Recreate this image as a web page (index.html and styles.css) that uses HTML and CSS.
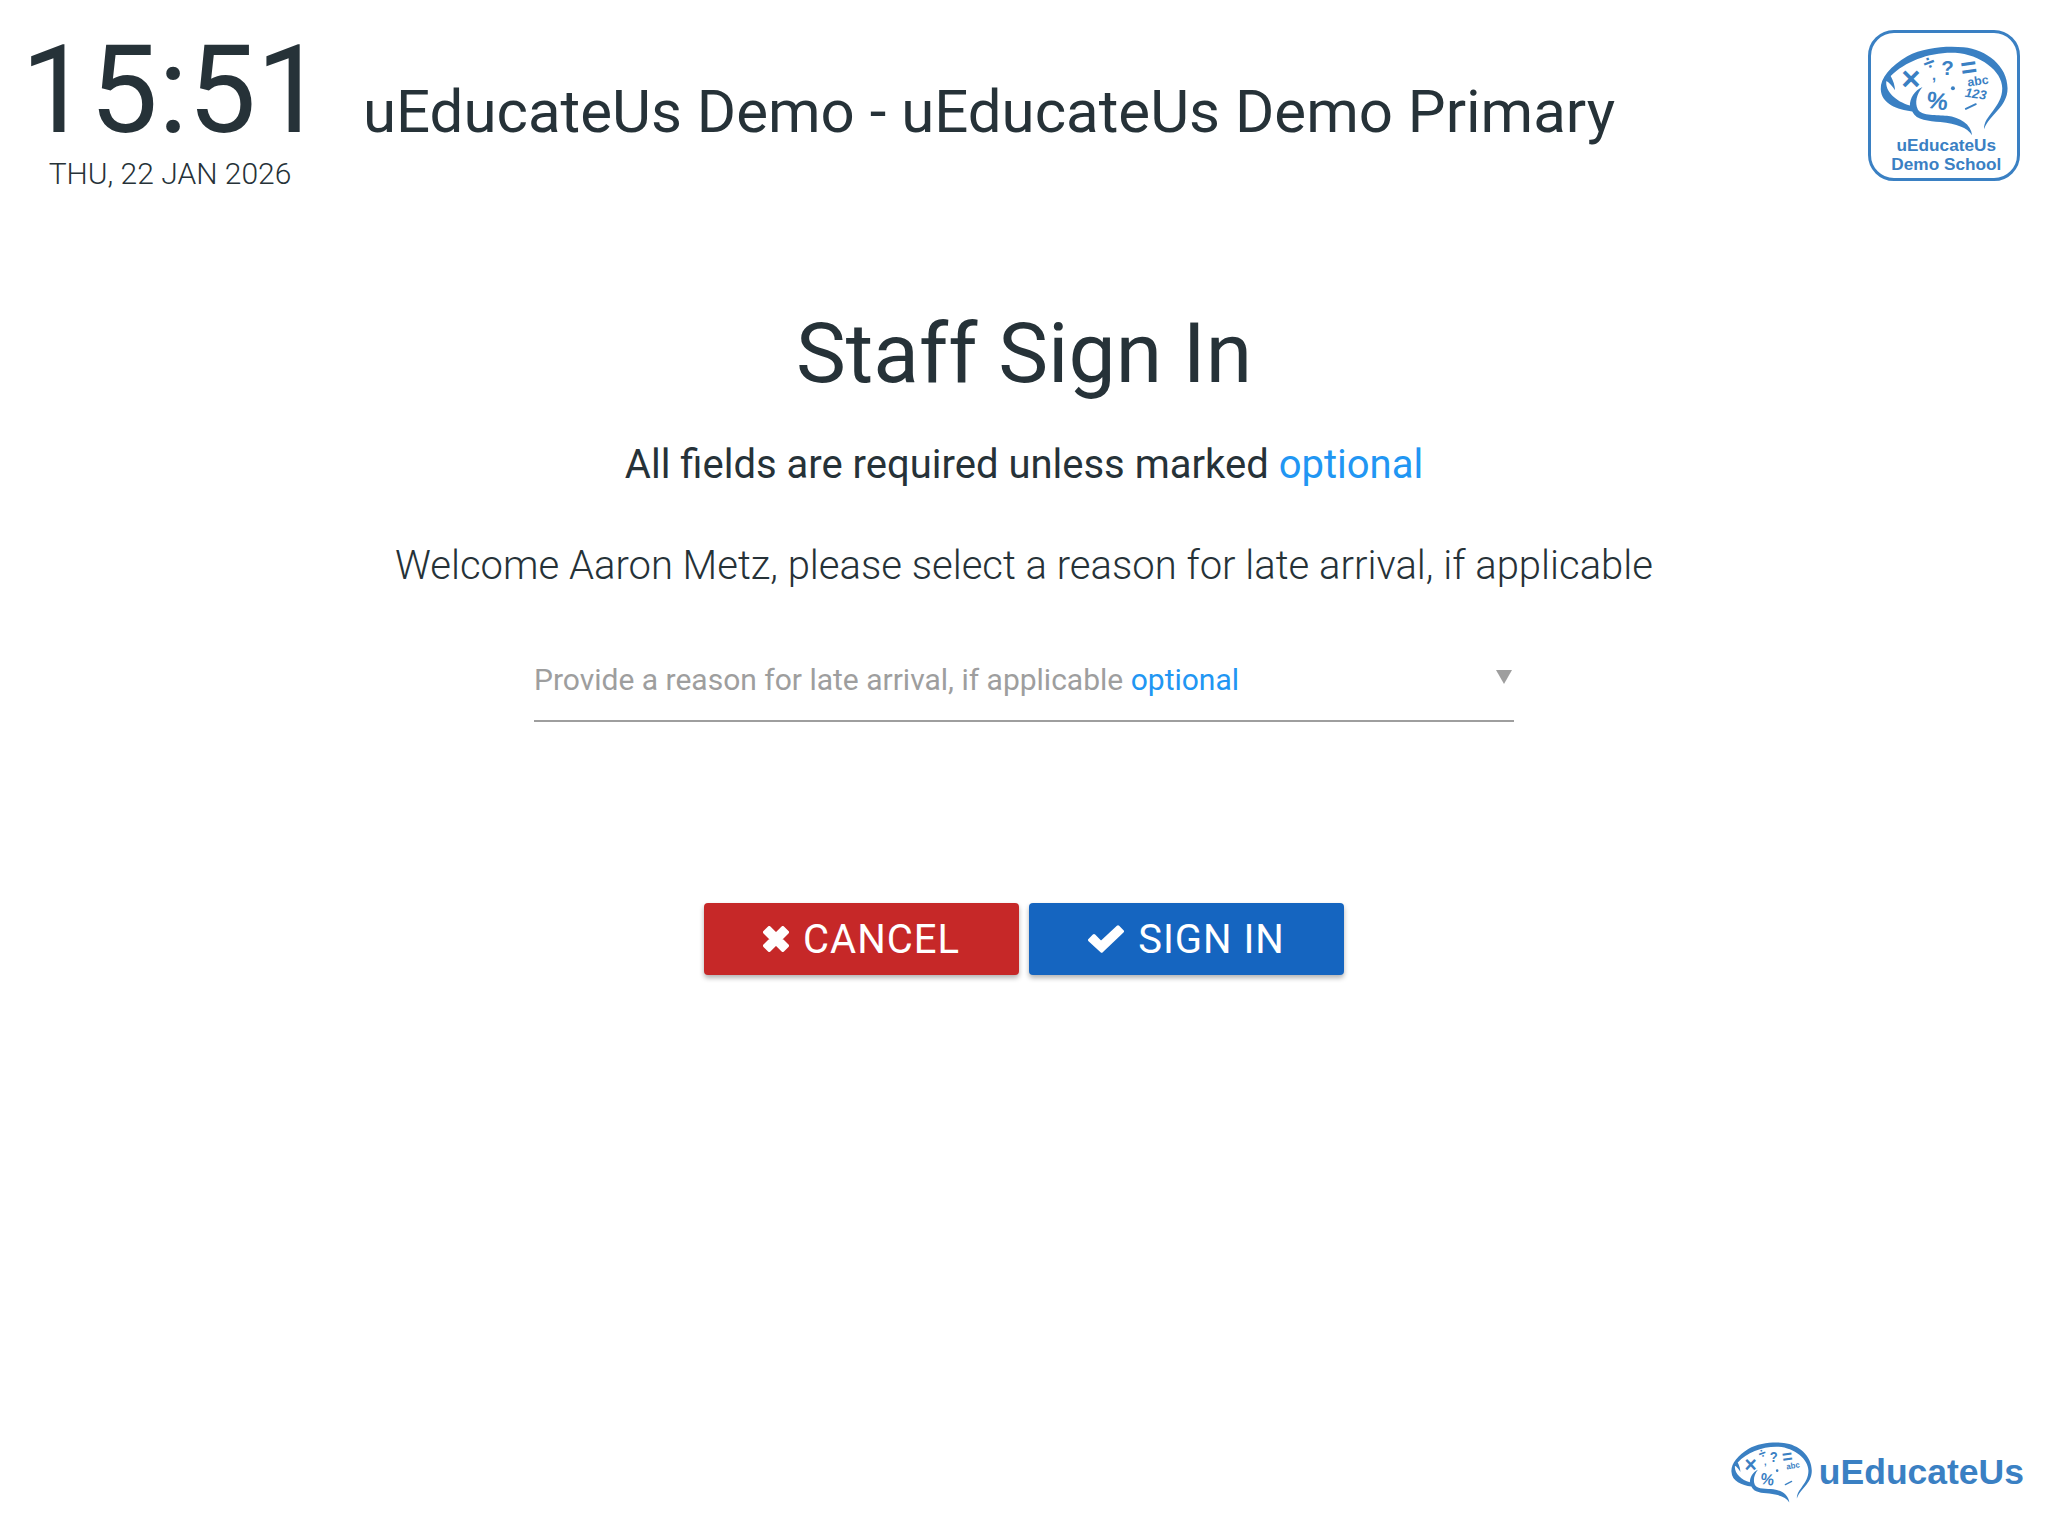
FILE: index.html
```html
<!DOCTYPE html>
<html lang="en">
<head>
    <meta charset="UTF-8">
    <meta name="viewport" content="width=device-width, initial-scale=1.0">
    <title>Staff Sign In</title>
    <link rel="stylesheet" href="styles.css">
</head>
<body>
    <!-- brain and its marks, shared by both logos -->
    <svg class="defs" width="0" height="0">
        <defs>
            <g id="brain">
                <path d="M120 235 C118 200 150 165 200 135 C250 108 320 103 370 108 C440 115 503 165 503 232 C503 290 448 310 432 356 C430 315 487 290 487 232 C487 180 420 130 345 125 C270 122 195 150 150 195 C158 210 163 225 163 238 C155 225 146 215 137 210 C132 240 165 272 208 284 C208 262 222 238 246 228 C228 250 222 275 232 296 C245 316 290 312 320 315 C360 320 392 340 396 374 C380 350 350 340 300 334 C265 330 228 330 215 302 C170 296 122 280 120 235 Z"/>
                <g class="logo-glyphs">
                    <text x="211" y="236" font-size="100">×</text>
                    <text x="266" y="175" font-size="62" transform="rotate(-20 266 155)">÷</text>
                    <text x="322" y="192" font-size="62">?</text>
                    <text x="386" y="197" font-size="84" transform="rotate(-8 386 168)">=</text>
                    <text x="281" y="207" font-size="44">,</text>
                    <text x="291" y="295" font-size="72" transform="rotate(8 291 272)">%</text>
                    <text x="413" y="222" font-size="37" transform="rotate(-8 413 205)">abc</text>
                </g>
                <circle cx="338" cy="232" r="6"/>
                <path class="brain-line" d="M377 294 L407 280"/>
            </g>
        </defs>
    </svg>

    <div class="page">
        <header class="topbar">
            <div class="clock">
                <div class="clock-time">15:51</div>
                <div class="clock-date">THU, 22 JAN 2026</div>
            </div>
            <div class="school-name">uEducateUs Demo - uEducateUs Demo Primary</div>
            <div class="school-logo">
                <svg class="school-logo-img" viewBox="92 65 438 438">
                    <use href="#brain"/>
                    <text class="logo-numbers" x="407" y="262" transform="rotate(8 407 248)">123</text>
                    <text class="logo-caption" x="318" y="420">uEducateUs</text>
                    <text class="logo-caption" x="318" y="480">Demo School</text>
                </svg>
            </div>
        </header>

        <main class="signin">
            <h1 class="signin-title">Staff Sign In</h1>
            <p class="signin-note">All fields are required unless marked <span class="optional">optional</span></p>
            <p class="signin-welcome">Welcome Aaron Metz, please select a reason for late arrival, if applicable</p>

            <div class="field">
                <span class="field-label">Provide a reason for late arrival, if applicable <span class="optional">optional</span></span>
                <span class="field-caret"></span>
            </div>

            <div class="actions">
                <button class="btn btn-cancel" type="button">
                    <svg class="btn-icon" viewBox="1.5 1.5 23 23"><path d="M7 3 L13 9 L19 3 L23 7 L17 13 L23 19 L19 23 L13 17 L7 23 L3 19 L9 13 L3 7 Z"/></svg>
                    CANCEL
                </button>
                <button class="btn btn-signin" type="button">
                    <svg class="btn-icon btn-icon-check" viewBox="1.5 1.5 33 25"><path d="M3 15 L7 11 L13.5 17.5 L29 3 L33 7 L14 25 Z"/></svg>
                    SIGN IN
                </button>
            </div>
        </main>

        <footer class="brand">
            <svg class="brand-mark" viewBox="118 104 386 272" preserveAspectRatio="none">
                <use href="#brain"/>
            </svg>
            <span class="brand-name">uEducateUs</span>
        </footer>
    </div>
</body>
</html>
```

FILE: styles.css
```css
* {
    box-sizing: border-box;
}

body {
    margin: 0;
    background-color: #fff;
    color: #263238;
    font-family: Roboto, sans-serif;
}

.defs {
    position: absolute;
}

.page {
    height: 100vh;
    display: flex;
    flex-direction: column;
    overflow: hidden;
}

/* header */
.topbar {
    display: flex;
    align-items: flex-start;
    padding: 30px 28px 0 24px;
    height: 305px;
}

.clock {
    width: 292px;
    text-align: center;
}

.clock-time {
    font-size: 122px;
    line-height: 116px;
    margin: 3px 0 0 -3px;
}

.clock-date {
    font-size: 30px;
    font-weight: 300;
    line-height: 36px;
    margin-top: 7px;
}

.school-name {
    font-size: 60px;
    line-height: 70px;
    margin: 47px 0 0 47px;
    flex: 1;
}

.school-logo {
    width: 152px;
    height: 151px;
}

.school-logo-img {
    display: block;
    width: 152px;
    height: 151px;
    fill: #3a80c3;
    border: 3px solid #3a80c3;
    border-radius: 26px;
}

.logo-glyphs text {
    font-family: "Liberation Sans", sans-serif;
    font-weight: 700;
    text-anchor: middle;
}

.logo-numbers {
    font-family: "Liberation Sans", sans-serif;
    font-size: 39px;
    font-style: italic;
    font-weight: 700;
    text-anchor: middle;
}

.logo-caption {
    font-family: "Liberation Sans", sans-serif;
    font-weight: 700;
    font-size: 52px;
    text-anchor: middle;
}

.brain-line {
    fill: none;
    stroke: #3a80c3;
    stroke-width: 6;
    stroke-linecap: round;
}

/* form */
.signin {
    display: flex;
    flex-direction: column;
    align-items: center;
}

.signin-title {
    margin: 0;
    font-size: 84px;
    font-weight: 400;
    line-height: 98px;
}

.signin-note {
    margin: 38px 0 0;
    font-size: 40px;
    line-height: 48px;
}

.signin-welcome {
    margin: 53px 0 0;
    font-size: 40px;
    font-weight: 300;
    line-height: 48px;
}

.optional {
    color: #2196f3;
}

.field {
    width: 980px;
    height: 80px;
    margin-top: 52px;
    padding-bottom: 4px;
    display: flex;
    justify-content: space-between;
    align-items: center;
    border-bottom: 2px solid #9e9e9e;
    color: #9e9e9e;
    font-size: 30px;
}

.field-caret {
    width: 0;
    height: 0;
    margin: 0 2px 4px 0;
    border-left: 8px solid transparent;
    border-right: 8px solid transparent;
    border-top: 14px solid #9e9e9e;
}

.actions {
    display: flex;
    gap: 10px;
    margin-top: 181px;
}

.btn {
    width: 315px;
    height: 72px;
    display: flex;
    align-items: center;
    justify-content: center;
    gap: 14px;
    border: 0;
    border-radius: 4px;
    color: #fff;
    font-family: Roboto, sans-serif;
    font-size: 40px;
    letter-spacing: 1px;
    box-shadow: 0 3px 5px rgba(0, 0, 0, 0.3);
}

.btn-cancel {
    background-color: #c62828;
}

.btn-signin {
    background-color: #1565c0;
}

.btn-icon {
    width: 26px;
    height: 26px;
    fill: #fff;
    stroke: #fff;
    stroke-width: 3;
    stroke-linejoin: round;
}

.btn-icon-check {
    width: 36px;
    height: 28px;
}

/* footer logo */
.brand {
    margin-top: auto;
    display: flex;
    align-items: center;
    justify-content: flex-end;
    gap: 7px;
    padding: 0 24px 33px 0;
}

.brand-mark {
    width: 81px;
    height: 61px;
    fill: #3a80c3;
}

.brand-name {
    font-family: "Liberation Sans", sans-serif;
    font-weight: 700;
    font-size: 35.5px;
    color: #3a80c3;
}
```
